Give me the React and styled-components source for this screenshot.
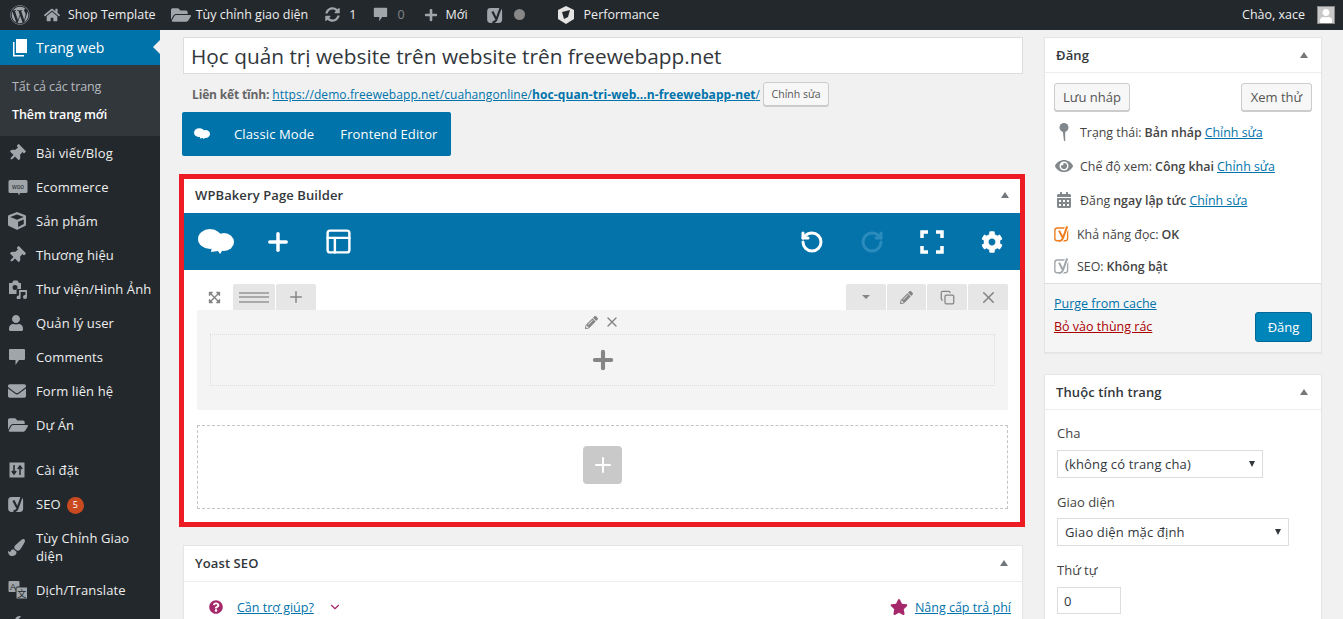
import React from "react";
import styled, { createGlobalStyle } from "styled-components";
import {
  FaWordpress,
  FaHome,
  FaFolderOpen,
  FaSyncAlt,
  FaPlus,
  FaThumbtack,
  FaCube,
  FaUser,
  FaEnvelope,
  FaPaintBrush,
  FaWrench,
  FaEye,
  FaCalendarAlt,
  FaStar,
  FaQuestionCircle,
  FaCog,
  FaPencilAlt,
  FaExpandArrowsAlt,
} from "react-icons/fa";
import { X, Plus, RotateCcw, RotateCw, PanelsTopLeft, Copy, ChevronDown } from "lucide-react";

const GlobalStyle = createGlobalStyle`
  html, body { margin: 0; padding: 0; background: #f1f1f1; }
  body {
    width: 1343px;
    height: 619px;
    overflow: hidden;
    font-family: "Open Sans", "Noto Sans", sans-serif;
    font-size: 13px;
    color: #444;
  }
  * { box-sizing: border-box; }
`;

const YoastMark = ({ size = 18, color = "#a0a5aa", cut = "#fff", fill = "none" }) => (
  <svg width={size} height={size} viewBox="0 0 20 20">
    <rect x="1" y="3" width="15" height="15" rx="3" fill={fill} stroke={color} strokeWidth="1.6" />
    {fill === "none" && (
      <path d="M6 6l4 8M15.500 1L10.500 15c-.6 1.700-2 3-4.500 3.500" fill="none" stroke={cut} strokeWidth="4.600" />
    )}
    <path d="M6 6l4 8M15.500 1L10.500 15c-.6 1.700-2 3-4.500 3.500" fill="none" stroke={fill === "none" ? color : cut} strokeWidth="2.400" />
  </svg>
);

const Cloud = ({ w = 36, h = 26 }) => (
  <svg width={w} height={h} viewBox="0 0 36 26" fill="#fff">
    <ellipse cx="12" cy="10" rx="12" ry="10" />
    <ellipse cx="26" cy="13" rx="10" ry="9" />
    <path d="M14 17h14l-4 5-2 3-2-3-7 1z" />
  </svg>
);

const WooBubble = () => (
  <svg width="20" height="20" viewBox="0 0 20 20">
    <path d="M2 3h16a1.500 1.500 0 0 1 1.500 1.500v10A1.500 1.500 0 0 1 18 16h-6l-1 2.500L10 16H2a1.500 1.500 0 0 1-1.500-1.500v-10A1.500 1.500 0 0 1 2 3z" fill="#a0a5aa" />
    <text x="10" y="11.500" textAnchor="middle" fontSize="6.500" fontFamily="Liberation Sans" fill="#23282d">woo</text>
  </svg>
);

const PagesIcon = () => (
  <svg width="20" height="20" viewBox="0 0 20 20" fill="#fff">
    <path d="M6 1h11v14H6z" />
    <path d="M3 4h1.500v13H14v1.500H3z" />
  </svg>
);

const Bubble = ({ size = 18, color = "#a0a5aa" }) => (
  <svg width={size} height={size} viewBox="0 0 18 18" fill={color}>
    <path d="M2 1h14a1 1 0 0 1 1 1v9a1 1 0 0 1-1 1h-5l-3.500 5v-5H2a1 1 0 0 1-1-1V2a1 1 0 0 1 1-1z" />
  </svg>
);

const MediaIcon = () => (
  <svg width="20" height="20" viewBox="0 0 20 20" fill="#a0a5aa">
    <path fillRule="evenodd" d="M1 4h3l1.500-2.500h4L11 4h2v6H8.500v5H1zM7 6a2.500 2.500 0 1 0 0 5 2.500 2.500 0 0 0 0-5z" />
    <path d="M11 11h8v7a2 2 0 1 1-1.600-2V13h-4.800v5.500a2 2 0 1 1-1.600-2z" />
  </svg>
);

const SlidersIcon = () => (
  <svg width="18" height="18" viewBox="0 0 18 18">
    <rect x="1.500" y="1.500" width="15" height="15" fill="#a0a5aa" />
    <path d="M6 4v8M3.800 10L6 13l2.200-3M12 14V6M9.800 8L12 5l2.200 3" fill="none" stroke="#23282d" strokeWidth="1.500" />
  </svg>
);

const TranslateIcon = () => (
  <svg width="20" height="20" viewBox="0 0 20 20">
    <rect x="0.500" y="1" width="11" height="11" rx="1" fill="#a0a5aa" />
    <rect x="8" y="7" width="11.500" height="12" rx="1" fill="#a0a5aa" stroke="#23282d" />
    <text x="5" y="10" textAnchor="middle" fontSize="9" fontFamily="Liberation Sans" fill="#23282d">A</text>
    <text x="13.800" y="17" textAnchor="middle" fontSize="9" fontFamily="Noto Sans CJK SC" fill="#23282d">文</text>
  </svg>
);

const PerfIcon = () => (
  <svg width="16" height="18" viewBox="0 0 16 18">
    <path d="M8 0l8 4v9l-8 5-8-5V4z" fill="#e4e4e4" />
    <path d="M4 6l8-2-2 7-4 2z" fill="#23282d" />
  </svg>
);

const PinIcon = () => (
  <svg width="14" height="20" viewBox="0 0 14 20" fill="#82878c">
    <circle cx="7" cy="5.500" r="4.500" />
    <path d="M5.800 9h2.400v10H7z" />
  </svg>
);

const FullIcon = () => (
  <svg width="24" height="24" viewBox="0 0 24 24" fill="none" stroke="#fff" strokeWidth="3.500">
    <path d="M2 8V2h6M16 2h6v6M22 16v6h-6M8 22H2v-6" />
  </svg>
);

const menuItems = [
  { icon: <FaThumbtack size={17} style={{ transform: "rotate(45deg)" }} />, label: "Bài viết/Blog" },
  { icon: <WooBubble />, label: "Ecommerce" },
  { icon: <FaCube size={18} />, label: "Sản phẩm" },
  { icon: <FaThumbtack size={17} style={{ transform: "rotate(45deg)" }} />, label: "Thương hiệu" },
  { icon: <MediaIcon />, label: "Thư viện/Hình Ảnh" },
  { icon: <FaUser size={16} />, label: "Quản lý user" },
  { icon: <Bubble />, label: "Comments" },
  { icon: <FaEnvelope size={18} />, label: "Form liên hệ" },
  { icon: <FaFolderOpen size={20} />, label: "Dự Án", last: true },
  { icon: <SlidersIcon />, label: "Cài đặt" },
  { icon: <YoastMark fill="#a0a5aa" cut="#23282d" />, label: "SEO", badge: 5 },
  { icon: <FaPaintBrush size={17} />, label: "Tùy Chỉnh Giao diện" },
  { icon: <TranslateIcon />, label: "Dịch/Translate" },
  { icon: <FaWrench size={16} />, label: "" },
];

const Shell = styled.div`
  display: flex;
  flex-direction: column;
  height: 619px;
  overflow: hidden;
`;

const AdminBar = styled.header`
  flex: none;
  height: 30px;
  background: #23282d;
  display: flex;
  align-items: center;
  padding: 0 8px 1px 10px;
  color: #eee;
  font-size: 12.500px;
`;

const BarItem = styled.div`
  display: flex;
  align-items: center;
  gap: ${(p) => p.$gap || 6}px;
  margin-right: ${(p) => p.$mr || 0}px;
  color: ${(p) => (p.$dim ? "#82878c" : "#eee")};
  white-space: nowrap;
  svg { color: #a0a5aa; flex: none; }
`;

const BarSpacer = styled.div`
  flex: 1;
`;

const Avatar = styled.div`
  width: 18px;
  height: 18px;
  margin-left: 6px;
  background: #c8c8c8;
  border: 1px solid #888;
  display: flex;
  align-items: flex-end;
  justify-content: center;
  overflow: hidden;
  svg { color: #fff; }
`;

const Dot = styled.span`
  width: 11px;
  height: 11px;
  border-radius: 50%;
  background: #888;
`;

const Content = styled.div`
  flex: 1;
  display: flex;
  min-height: 0;
`;

const Sidebar = styled.nav`
  flex: none;
  width: 160px;
  background: #23282d;
  color: #eee;
`;

const ActiveItem = styled.div`
  position: relative;
  height: 35px;
  background: #0073aa;
  color: #fff;
  display: flex;
  align-items: center;
  gap: 6px;
  padding-left: 10px;
  font-size: 14px;
  &::after {
    content: "";
    position: absolute;
    right: 0;
    top: 10px;
    border: 7px solid transparent;
    border-right-color: #f1f1f1;
    border-left-width: 0;
  }
`;

const SubMenu = styled.div`
  height: 71px;
  background: #32373c;
  padding: 13px 0 0 12px;
  display: flex;
  flex-direction: column;
  gap: 10px;
`;

const SubItem = styled.div`
  line-height: 18px;
  font-size: 12.500px;
  letter-spacing: -0.1px;
  color: ${(p) => (p.$current ? "#fff" : "rgba(240,245,250,.7)")};
  font-weight: ${(p) => (p.$current ? 600 : 400)};
`;

const MenuRow = styled.div`
  display: flex;
  align-items: center;
  min-height: 34px;
  padding: 8px 0;
  margin-bottom: ${(p) => (p.$last ? 11 : 0)}px;
  line-height: 18px;
`;

const MenuIcon = styled.span`
  flex: none;
  width: 36px;
  height: 18px;
  padding-left: 8px;
  display: flex;
  align-items: center;
  svg { color: #a0a5aa; }
`;

const MenuLabel = styled.span`
  font-size: 13px;
  letter-spacing: 0.12px;
  padding-right: 4px;
`;

const Badge = styled.span`
  display: inline-flex;
  vertical-align: middle;
  width: 17px;
  height: 17px;
  margin: -3px 0 -2px 6px;
  border-radius: 50%;
  background: #ca4a1f;
  color: #fff;
  font-size: 9px;
  align-items: center;
  justify-content: center;
`;

const Main = styled.main`
  flex: 1;
  display: flex;
  align-items: flex-start;
  gap: 21px;
  padding: 7px 21px 0 23px;
  min-width: 0;
`;

const Editor = styled.div`
  flex: none;
  width: 840px;
`;

const TitleInput = styled.input`
  display: block;
  width: 100%;
  height: 37px;
  padding: 0 7px;
  border: 1px solid #ddd;
  background: #fff;
  color: #32373c;
  font: 20.800px "Open Sans", sans-serif;
  outline: none;
`;

const Permalink = styled.div`
  display: flex;
  align-items: center;
  height: 26px;
  margin-top: 7px;
  padding-left: 9px;
  font-size: 12px;
  color: #666;
  white-space: nowrap;
  a { color: #0073aa; text-decoration: underline; letter-spacing: 0.08px; }
`;

const PermaLabel = styled.b`
  margin-right: 3px;
  letter-spacing: -0.15px;
`;

const SmallButton = styled.button`
  height: 24px;
  margin-left: 3px;
  padding: 0 7.500px;
  font: 10.500px "Open Sans", sans-serif;
  color: #555;
  background: #f7f7f7;
  border: 1px solid #ccc;
  border-radius: 3px;
  box-shadow: 0 1px 0 #ccc;
`;

const ModeBar = styled.div`
  display: flex;
  width: fit-content;
  align-items: center;
  height: 44px;
  margin-top: 5px;
  margin-left: -1px;
  padding: 0 13px 0 12px;
  background: #0073aa;
  border-radius: 2px;
  color: #fff;
  gap: 26px;
  letter-spacing: 0.13px;
`;

const ModeLogo = styled.span`
  display: flex;
  margin-right: -2px;
`;

const Highlight = styled.section`
  margin: 18px -2px 18px -4px;
  border: 5px solid #ed1c24;
  background: #fff;
`;

const BoxHeader = styled.div`
  display: flex;
  align-items: center;
  justify-content: space-between;
  height: ${(p) => p.$h || 35}px;
  padding: 0 ${(p) => p.$pr || 11}px ${(p) => p.$pb || 0}px ${(p) => p.$pl || 11}px;
  font-weight: 600;
  letter-spacing: 0.1px;
  color: #32373c;
  border-bottom: ${(p) => (p.$line ? "1px solid #eee" : "none")};
`;

const Caret = styled.span`
  width: 0;
  height: 0;
  border: 4px solid transparent;
  border-top: 0;
  border-bottom: 6px solid #72777c;
`;

const BuilderBar = styled.div`
  display: flex;
  align-items: center;
  gap: 24px;
  height: 57px;
  padding: 0 10px 0 14px;
  background: #0473aa;
`;

const BarButton = styled.span`
  display: flex;
  width: 36px;
  justify-content: center;
  color: ${(p) => (p.$off ? "#2b8bbd" : "#fff")};
`;

const LogoSlot = styled.span`
  display: flex;
  width: 38px;
`;

const Canvas = styled.div`
  padding: 14px 12px 13px 13px;
`;

const TabStrip = styled.div`
  display: flex;
  justify-content: space-between;
  height: 26px;
`;

const TabGroup = styled.div`
  display: flex;
  gap: 1px;
`;

const Tab = styled.span`
  display: flex;
  align-items: center;
  justify-content: center;
  width: ${(p) => p.$w || 40}px;
  background: ${(p) => (p.$plain ? "transparent" : "#e6e6e6")};
  color: #858585;
  border-radius: 2px 2px 0 0;
`;

const GripLines = styled.span`
  width: 30px;
  height: 11px;
  border-top: 2px solid #aaa;
  border-bottom: 2px solid #aaa;
  position: relative;
  &::after {
    content: "";
    position: absolute;
    left: 0;
    right: 0;
    top: 2.500px;
    height: 2px;
    background: #aaa;
  }
`;

const TabCaret = styled.span`
  border: 4px solid transparent;
  border-top: 4px solid #858585;
  border-bottom: 0;
`;

const RowBlock = styled.div`
  height: 100px;
  background: #f4f4f4;
  padding: 0 13px;
`;

const RowControls = styled.div`
  display: flex;
  align-items: center;
  justify-content: center;
  gap: 6px;
  height: 24px;
  color: #858585;
`;

const ColumnSlot = styled.div`
  height: 52px;
  border: 1px dotted #ddd;
  display: flex;
  align-items: center;
  justify-content: center;
  color: #858585;
`;

const EmptyDrop = styled.div`
  height: 84px;
  margin-top: 15px;
  padding-bottom: 4px;
  border: 1px dashed #c4c4c4;
  display: flex;
  align-items: center;
  justify-content: center;
`;

const AddButton = styled.span`
  width: 39px;
  height: 38px;
  border-radius: 4px;
  background: #c9c9c9;
  color: #fff;
  display: flex;
  align-items: center;
  justify-content: center;
`;

const Box = styled.section`
  background: #fff;
  border: 1px solid #e5e5e5;
  box-shadow: 0 1px 1px rgba(0, 0, 0, 0.04);
  margin-bottom: ${(p) => p.$mb || 0}px;
`;

const YoastRow = styled.div`
  display: flex;
  align-items: center;
  justify-content: space-between;
  height: 50px;
  padding: 0 11px 0 25px;
  font-size: 12.500px;
  a { color: #0073aa; text-decoration: underline; }
`;

const YoastGroup = styled.div`
  display: flex;
  align-items: center;
  gap: ${(p) => p.$gap || 7}px;
  svg { color: #a4286a; }
`;

const Side = styled.aside`
  flex: none;
  width: 278px;
`;

const PublishTop = styled.div`
  display: flex;
  justify-content: space-between;
  padding: 10px 9px 0;
`;

const GhostButton = styled.button`
  width: ${(p) => p.$w}px;
  height: 28px;
  padding: 0;
  font: 13px "Open Sans", sans-serif;
  color: #555;
  background: #f7f7f7;
  border: 1px solid #ccc;
  border-radius: 3px;
  box-shadow: 0 1px 0 #ccc;
`;

const MetaList = styled.div`
  padding: 4px 10px 0 9px;
  height: 172px;
`;

const MetaRow = styled.div`
  display: flex;
  align-items: center;
  height: ${(p) => p.$h || 34}px;
  white-space: nowrap;
  font-size: 12.400px;
  b { font-weight: 600; margin: 0 3px; }
  a { color: #0073aa; text-decoration: underline; }
`;

const MetaIcon = styled.span`
  flex: none;
  display: flex;
  justify-content: center;
  width: ${(p) => p.$w || 26}px;
  padding-right: 6px;
  color: #82878c;
`;

const PublishFoot = styled.div`
  display: flex;
  justify-content: space-between;
  height: 69px;
  padding: 11px 9px 0 9px;
  background: #f5f5f5;
  border-top: 1px solid #ddd;
  font-size: 12.500px;
`;

const FootLinks = styled.div`
  display: flex;
  flex-direction: column;
  gap: 5px;
  line-height: 18px;
`;

const FootLink = styled.a`
  color: ${(p) => (p.$danger ? "#a00" : "#0073aa")};
  text-decoration: underline;
`;

const PublishButton = styled.button`
  align-self: flex-start;
  width: 57px;
  height: 30px;
  margin-top: 17px;
  color: #fff;
  background: #0085ba;
  border: 1px solid #006799;
  border-radius: 3px;
  font: 13px "Open Sans", sans-serif;
`;

const Attrs = styled.div`
  padding: 14px 12px 0;
  height: 209px;
`;

const FieldLabel = styled.div`
  line-height: 18px;
  font-weight: 500;
  margin-bottom: ${(p) => p.$mb || 8}px;
`;

const SelectBox = styled.div`
  display: flex;
  align-items: center;
  justify-content: space-between;
  width: ${(p) => p.$w}px;
  height: 28px;
  padding: 0 7px;
  margin-bottom: 15px;
  border: 1px solid #ddd;
  color: #32373c;
  font-size: 13px;
  letter-spacing: 0.14px;
  &::after {
    content: "";
    border: 3.500px solid transparent;
    border-top: 6px solid #32373c;
    border-bottom: 0;
  }
`;

const NumberBox = styled.div`
  width: 64px;
  height: 27px;
  padding: 0 6px;
  display: flex;
  align-items: center;
  border: 1px solid #ddd;
  color: #32373c;
`;

export default function App() {
  return (
    <Shell>
      <GlobalStyle />
      <AdminBar>
        <BarItem $mr={14}><FaWordpress size={20} /></BarItem>
        <BarItem $mr={15} $gap={8}><FaHome size={16} />Shop Template</BarItem>
        <BarItem $mr={17} $gap={5}><FaFolderOpen size={20} />Tùy chỉnh giao diện</BarItem>
        <BarItem $mr={17} $gap={9}><FaSyncAlt size={15} />1</BarItem>
        <BarItem $mr={19} $gap={9} $dim><Bubble size={15} />0</BarItem>
        <BarItem $mr={19} $gap={8}><FaPlus size={14} />Mới</BarItem>
        <BarItem $mr={33} $gap={9}><YoastMark fill="#a0a5aa" cut="#23282d" /><Dot /></BarItem>
        <BarItem $gap={10}><PerfIcon />Performance</BarItem>
        <BarSpacer />
        <BarItem $gap={0}>Chào, xace<Avatar><FaUser size={14} /></Avatar></BarItem>
      </AdminBar>
      <Content>
        <Sidebar>
          <ActiveItem><PagesIcon />Trang web</ActiveItem>
          <SubMenu>
            <SubItem>Tất cả các trang</SubItem>
            <SubItem $current>Thêm trang mới</SubItem>
          </SubMenu>
          {menuItems.map((item) => (
            <MenuRow key={item.label} $last={item.last}>
              <MenuIcon>{item.icon}</MenuIcon>
              <MenuLabel>
                {item.label}
                {item.badge && <Badge>{item.badge}</Badge>}
              </MenuLabel>
            </MenuRow>
          ))}
        </Sidebar>
        <Main>
          <Editor>
            <TitleInput readOnly value="Học quản trị website trên website trên freewebapp.net" />
            <Permalink>
              <PermaLabel>Liên kết tĩnh:</PermaLabel>
              <a>https://demo.freewebapp.net/cuahangonline/<b>hoc-quan-tri-web...n-freewebapp-net</b>/</a>
              <SmallButton>Chỉnh sửa</SmallButton>
            </Permalink>
            <ModeBar>
              <ModeLogo><Cloud w={16} h={12} /></ModeLogo>
              <span>Classic Mode</span>
              <span>Frontend Editor</span>
            </ModeBar>
            <Highlight>
              <BoxHeader $h={34} $pb={2}>WPBakery Page Builder<Caret /></BoxHeader>
              <BuilderBar>
                <LogoSlot><Cloud /></LogoSlot>
                <BarButton><Plus size={28} strokeWidth={3} /></BarButton>
                <BarButton><PanelsTopLeft size={29} strokeWidth={2} /></BarButton>
                <BarSpacer />
                <BarButton><RotateCcw size={24} strokeWidth={3} /></BarButton>
                <BarButton $off><RotateCw size={24} strokeWidth={3} /></BarButton>
                <BarButton><FullIcon /></BarButton>
                <BarButton><FaCog size={22} /></BarButton>
              </BuilderBar>
              <Canvas>
                <TabStrip>
                  <TabGroup>
                    <Tab $w={35} $plain><FaExpandArrowsAlt size={13} /></Tab>
                    <Tab $w={42}><GripLines /></Tab>
                    <Tab><Plus size={18} /></Tab>
                  </TabGroup>
                  <TabGroup>
                    <Tab><TabCaret /></Tab>
                    <Tab $w={39}><FaPencilAlt size={13} /></Tab>
                    <Tab><Copy size={15} /></Tab>
                    <Tab><X size={19} /></Tab>
                  </TabGroup>
                </TabStrip>
                <RowBlock>
                  <RowControls><FaPencilAlt size={13} /><X size={16} /></RowControls>
                  <ColumnSlot><Plus size={28} strokeWidth={3.500} /></ColumnSlot>
                </RowBlock>
                <EmptyDrop>
                  <AddButton><Plus size={24} strokeWidth={2} /></AddButton>
                </EmptyDrop>
              </Canvas>
            </Highlight>
            <Box>
              <BoxHeader $h={36} $pb={2} $pr={14} $line>Yoast SEO<Caret /></BoxHeader>
              <YoastRow>
                <YoastGroup $gap={14}>
                  <FaQuestionCircle size={14} />
                  <a>Cần trợ giúp?</a>
                  <ChevronDown size={14} />
                </YoastGroup>
                <YoastGroup>
                  <FaStar size={18} />
                  <a>Nâng cấp trả phí</a>
                </YoastGroup>
              </YoastRow>
            </Box>
          </Editor>
          <Side>
            <Box $mb={21}>
              <BoxHeader $pr={13} $line>Đăng<Caret /></BoxHeader>
              <PublishTop>
                <GhostButton $w={76}>Lưu nháp</GhostButton>
                <GhostButton $w={71}>Xem thử</GhostButton>
              </PublishTop>
              <MetaList>
                <MetaRow><MetaIcon><PinIcon /></MetaIcon>Trạng thái:<b>Bản nháp</b><a>Chỉnh sửa</a></MetaRow>
                <MetaRow><MetaIcon><FaEye size={18} /></MetaIcon>Chế độ xem:<b>Công khai</b><a>Chỉnh sửa</a></MetaRow>
                <MetaRow><MetaIcon><FaCalendarAlt size={16} /></MetaIcon>Đăng<b>ngay lập tức</b><a>Chỉnh sửa</a></MetaRow>
                <MetaRow><MetaIcon $w={23}><YoastMark color="#ee7c1b" /></MetaIcon>Khả năng đọc:<b>OK</b></MetaRow>
                <MetaRow $h={30}><MetaIcon $w={23}><YoastMark color="#a0a5aa" /></MetaIcon>SEO:<b>Không bật</b></MetaRow>
              </MetaList>
              <PublishFoot>
                <FootLinks>
                  <FootLink>Purge from cache</FootLink>
                  <FootLink $danger>Bỏ vào thùng rác</FootLink>
                </FootLinks>
                <PublishButton>Đăng</PublishButton>
              </PublishFoot>
            </Box>
            <Box>
              <BoxHeader $pr={13} $line>Thuộc tính trang<Caret /></BoxHeader>
              <Attrs>
                <FieldLabel>Cha</FieldLabel>
                <SelectBox $w={206}>(không có trang cha)</SelectBox>
                <FieldLabel $mb={7}>Giao diện</FieldLabel>
                <SelectBox $w={232}>Giao diện mặc định</SelectBox>
                <FieldLabel>Thứ tự</FieldLabel>
                <NumberBox>0</NumberBox>
              </Attrs>
            </Box>
          </Side>
        </Main>
      </Content>
    </Shell>
  );
}
